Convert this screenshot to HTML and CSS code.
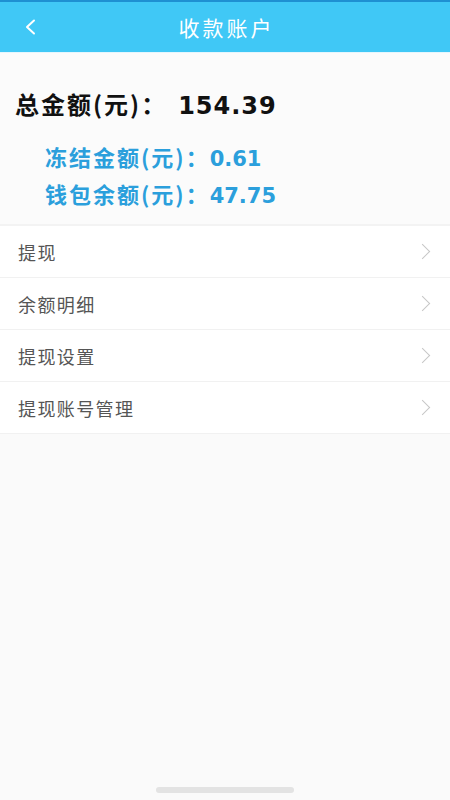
FILE: index.html
```html
<!DOCTYPE html>
<html lang="zh-CN">
<head>
  <meta charset="UTF-8">
  <meta name="viewport" content="width=device-width, initial-scale=1.0">
  <title>收款账户</title>
  <link rel="stylesheet" href="styles.css">
</head>
<body>
  <div class="page">
    <div class="top-bar">
      <span class="back">
        <svg width="12" height="16" viewBox="0 0 12 16"><path d="M10 1.5 L3 8 L10 14.5" fill="none" stroke="#fff" stroke-width="2" stroke-linecap="round" stroke-linejoin="round"/></svg>
      </span>
      <h1>收款账户</h1>
    </div>

    <div class="summary">
      <div class="total">总金额(元)：<span class="num">154.39</span></div>
      <div class="sub">冻结金额(元)：<span class="num">0.61</span></div>
      <div class="sub">钱包余额(元)：<span class="num">47.75</span></div>
    </div>

    <ul class="menu">
      <li>提现<span class="arrow"></span></li>
      <li>余额明细<span class="arrow"></span></li>
      <li>提现设置<span class="arrow"></span></li>
      <li>提现账号管理<span class="arrow"></span></li>
    </ul>

    <div class="home-bar"></div>
  </div>
</body>
</html>
```

FILE: styles.css
```css
body {
  margin: 0;
  font-family: "Noto Sans CJK SC", "Noto Sans", sans-serif;
  background: #fafafa;
}
.page {
  height: 800px;
  display: flex;
  flex-direction: column;
}
.top-bar {
  height: 50px;
  border-top: 2px solid #1e90d2;
  background: #40c8f6;
  display: flex;
  align-items: center;
  justify-content: center;
  position: relative;
  border-bottom: 1px solid #e6f6fd;
}
.top-bar h1 {
  margin: 0;
  font-size: 21px;
  font-weight: normal;
  color: #fff;
  letter-spacing: 3px;
  margin-right: -3px;
}
.back {
  position: absolute;
  left: 24px;
  top: 17px;
  display: flex;
}
.summary {
  padding: 35px 0 12px 15px;
  background: #fbfbfb;
}
.total {
  font-size: 24px;
  font-weight: bold;
  color: #111;
  line-height: 32px;
  letter-spacing: 2px;
  margin-bottom: 18px;
}
.num {
  font-family: "DejaVu Sans", sans-serif;
  line-height: 1;
}
.total .num {
  letter-spacing: 1px;
  margin-left: 11px;
}
.sub {
  font-size: 22px;
  font-weight: bold;
  color: #2b9fdc;
  line-height: 37px;
  padding-left: 30px;
  letter-spacing: 2px;
}
.sub .num {
  font-size: 21px;
  letter-spacing: 0;
}
.menu {
  list-style: none;
  margin: 0;
  padding: 0;
  border-top: 2px solid #f3f3f3;
}
.menu li {
  height: 51px;
  border-bottom: 1px solid #f1f1f1;
  background: #fff;
  display: flex;
  align-items: center;
  justify-content: space-between;
  padding: 0 18px;
  font-size: 18px;
  letter-spacing: 1.4px;
  color: #555;
}
.arrow {
  width: 10px;
  height: 10px;
  border-top: 1.2px solid #c6c6c6;
  border-right: 1.2px solid #c6c6c6;
  transform: rotate(45deg);
  margin-right: 4px;
}
.home-bar {
  margin: auto auto 7px;
  width: 138px;
  height: 6px;
  border-radius: 3px;
  background: #e3e3e3;
}
```
